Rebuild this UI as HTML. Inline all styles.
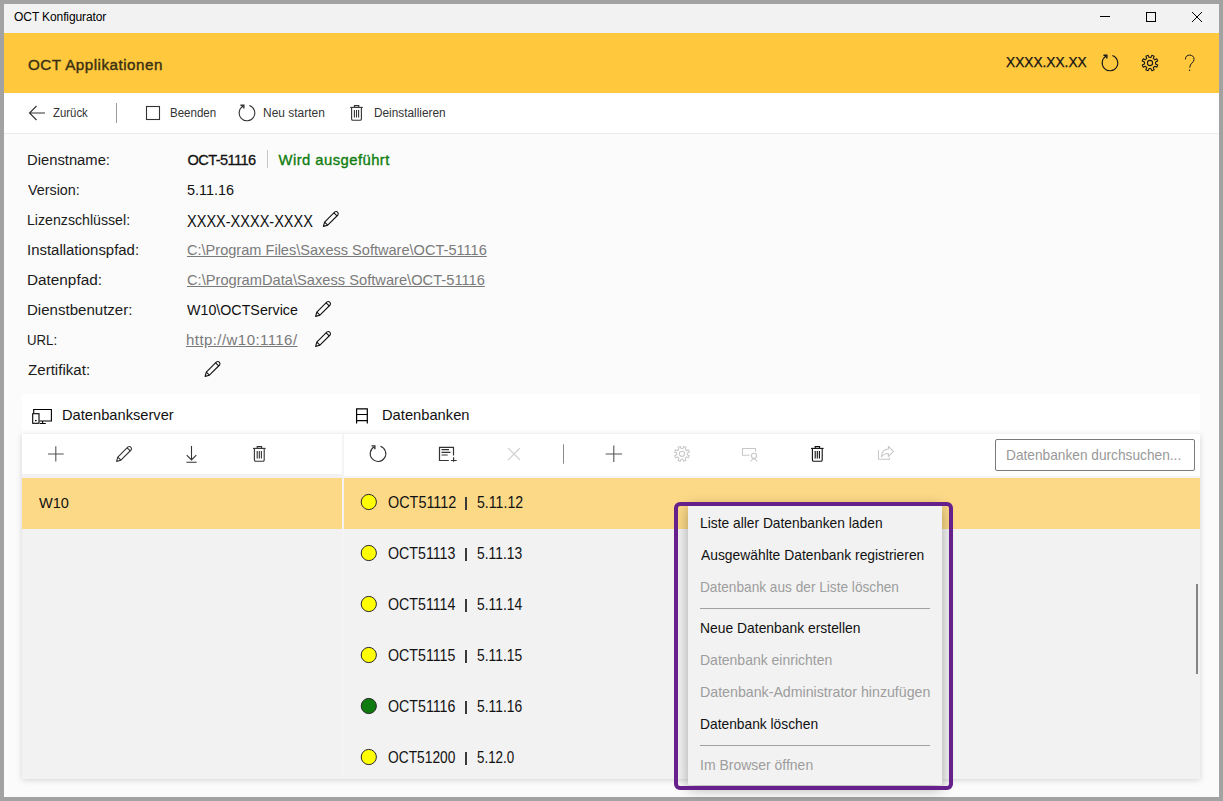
<!DOCTYPE html>
<html><head><meta charset="utf-8">
<style>
html,body{margin:0;padding:0;}
body{width:1223px;height:801px;position:relative;overflow:hidden;background:#a2a2a2;font-family:"Liberation Sans",sans-serif;color:#000;}
.t{position:absolute;white-space:nowrap;line-height:1;}
.b{position:absolute;}
svg{position:absolute;left:0;top:0;overflow:visible;}
</style></head>
<body>
<div class="b" style="left:4px;top:4px;width:1215px;height:793px;background:#fbfbfb;"></div>
<div class="b" style="left:4px;top:4px;width:1215px;height:29px;background:#f2f2f2;"></div>
<div class="t" style="left:14.10px;top:11.00px;font-size:12.0px;color:#000;letter-spacing:-0.109px;">OCT Konfigurator</div>
<div class="b" style="left:4px;top:32px;width:1215px;height:1px;background:#eef2f8;"></div>
<div class="b" style="left:4px;top:33px;width:1215px;height:60px;background:#ffc83d;"></div>
<div class="t" style="left:28.00px;top:57.01px;font-size:15.2px;color:#3a3012;letter-spacing:0.499px;-webkit-text-stroke:0.4px #3a3012;">OCT Applikationen</div>
<div class="t" style="left:1005.50px;top:55.01px;font-size:14.8px;color:#111;transform:scaleX(0.925);transform-origin:0 0;-webkit-text-stroke:0.25px #111;">XXXX.XX.XX</div>
<div class="b" style="left:4px;top:93px;width:1215px;height:40px;background:#fff;border-bottom:1px solid #ebebeb;"></div>
<div class="t" style="left:53.00px;top:107.01px;font-size:12.0px;color:#333;transform:scaleX(0.9476);transform-origin:0 0;">Zurück</div>
<div class="t" style="left:169.50px;top:107.01px;font-size:12.0px;color:#333;transform:scaleX(0.9605);transform-origin:0 0;">Beenden</div>
<div class="t" style="left:263.30px;top:107.01px;font-size:12.0px;color:#333;transform:scaleX(0.9958);transform-origin:0 0;">Neu starten</div>
<div class="t" style="left:373.50px;top:107.01px;font-size:12.0px;color:#333;transform:scaleX(0.9843);transform-origin:0 0;">Deinstallieren</div>
<div class="t" style="left:26.83px;top:152.01px;font-size:15.2px;color:#1a1a1a;transform:scaleX(0.9730);transform-origin:0 0;">Dienstname:</div>
<div class="t" style="left:27.80px;top:182.01px;font-size:15.2px;color:#1a1a1a;transform:scaleX(0.9430);transform-origin:0 0;">Version:</div>
<div class="t" style="left:26.87px;top:212.01px;font-size:15.2px;color:#1a1a1a;transform:scaleX(0.9320);transform-origin:0 0;">Lizenzschlüssel:</div>
<div class="t" style="left:26.82px;top:242.01px;font-size:15.2px;color:#1a1a1a;transform:scaleX(0.9833);transform-origin:0 0;">Installationspfad:</div>
<div class="t" style="left:26.79px;top:272.01px;font-size:15.2px;color:#1a1a1a;transform:scaleX(1.0085);transform-origin:0 0;">Datenpfad:</div>
<div class="t" style="left:26.81px;top:302.01px;font-size:15.2px;color:#1a1a1a;transform:scaleX(0.9909);transform-origin:0 0;">Dienstbenutzer:</div>
<div class="t" style="left:26.93px;top:332.01px;font-size:15.2px;color:#1a1a1a;transform:scaleX(0.8708);transform-origin:0 0;">URL:</div>
<div class="t" style="left:27.80px;top:362.01px;font-size:15.2px;color:#1a1a1a;transform:scaleX(0.9946);transform-origin:0 0;">Zertifikat:</div>
<div class="t" style="left:187.50px;top:153.01px;font-size:14.6px;color:#111;letter-spacing:-0.582px;-webkit-text-stroke:0.3px #111;">OCT-51116</div>
<div class="b" style="left:267px;top:150px;width:1px;height:18px;background:#c8c8c8;"></div>
<div class="t" style="left:278.50px;top:153.02px;font-size:14.8px;color:#0f7d0f;letter-spacing:0.455px;-webkit-text-stroke:0.35px #0f7d0f;">Wird ausgeführt</div>
<div class="t" style="left:187.20px;top:182.01px;font-size:15.2px;color:#111;transform:scaleX(0.9491);transform-origin:0 0;">5.11.16</div>
<div class="t" style="left:187.20px;top:214.01px;font-size:15.6px;color:#111;transform:scaleX(0.9315);transform-origin:0 0;">XXXX-XXXX-XXXX</div>
<div class="t" style="left:186.80px;top:242.01px;font-size:15.0px;color:#7a7a7a;text-decoration:underline;transform:scaleX(0.9709);transform-origin:0 0;">C:\Program Files\Saxess Software\OCT-51116</div>
<div class="t" style="left:186.80px;top:272.00px;font-size:15.0px;color:#7a7a7a;text-decoration:underline;transform:scaleX(0.9779);transform-origin:0 0;">C:\ProgramData\Saxess Software\OCT-51116</div>
<div class="t" style="left:187.00px;top:302.01px;font-size:15.2px;color:#111;transform:scaleX(0.9388);transform-origin:0 0;">W10\OCTService</div>
<div class="t" style="left:186.00px;top:332.01px;font-size:15.0px;color:#7a7a7a;letter-spacing:0.437px;text-decoration:underline;">http://w10:1116/</div>
<div class="b" style="left:22px;top:394px;width:1178px;height:40px;background:#fff;"></div>
<div class="t" style="left:62.21px;top:408.01px;font-size:14.8px;color:#111;transform:scaleX(0.9915);transform-origin:0 0;">Datenbankserver</div>
<div class="t" style="left:381.81px;top:408.01px;font-size:14.8px;color:#111;transform:scaleX(0.9942);transform-origin:0 0;">Datenbanken</div>
<div class="b" style="left:22px;top:434px;width:1178px;height:345px;background:#f2f2f2;box-shadow:0 1px 6px rgba(0,0,0,0.16);"></div>
<div class="b" style="left:22px;top:434px;width:320px;height:40px;background:#fff;"></div>
<div class="b" style="left:344px;top:434px;width:856px;height:42px;background:#fff;"></div>
<div class="b" style="left:344px;top:476px;width:856px;height:2px;background:#f3f4f7;"></div>
<div class="b" style="left:342px;top:434px;width:2px;height:345px;background:#f4f4f4;"></div>
<div class="b" style="left:995px;top:439px;width:198px;height:30px;border:1px solid #7a7a7a;border-radius:2px;background:#fff;"></div>
<div class="t" style="left:1005.75px;top:448.00px;font-size:14.4px;color:#999999;transform:scaleX(0.9521);transform-origin:0 0;">Datenbanken durchsuchen...</div>
<div class="b" style="left:22px;top:478px;width:320px;height:51px;background:#fcd987;"></div>
<div class="b" style="left:344px;top:478px;width:856px;height:51px;background:#fcd987;"></div>
<div class="t" style="left:39.30px;top:495.01px;font-size:15.2px;color:#111;transform:scaleX(0.9584);transform-origin:0 0;">W10</div>
<div class="t" style="left:387.60px;top:495.00px;font-size:15.8px;color:#111;transform:scaleX(0.9118);transform-origin:0 0;">OCT51112</div>
<div class="b" style="left:465.3px;top:496.60px;width:1.3px;height:13.8px;background:#3a3a3a;"></div>
<div class="t" style="left:476.90px;top:495.00px;font-size:15.8px;color:#111;transform:scaleX(0.8946);transform-origin:0 0;">5.11.12</div>
<div class="t" style="left:387.60px;top:546.00px;font-size:15.8px;color:#111;transform:scaleX(0.8996);transform-origin:0 0;">OCT51113</div>
<div class="b" style="left:465.3px;top:547.60px;width:1.3px;height:13.8px;background:#3a3a3a;"></div>
<div class="t" style="left:476.90px;top:546.00px;font-size:15.8px;color:#111;transform:scaleX(0.8773);transform-origin:0 0;">5.11.13</div>
<div class="t" style="left:387.60px;top:597.00px;font-size:15.8px;color:#111;transform:scaleX(0.8996);transform-origin:0 0;">OCT51114</div>
<div class="b" style="left:465.3px;top:598.60px;width:1.3px;height:13.8px;background:#3a3a3a;"></div>
<div class="t" style="left:476.90px;top:597.00px;font-size:15.8px;color:#111;transform:scaleX(0.8773);transform-origin:0 0;">5.11.14</div>
<div class="t" style="left:387.60px;top:648.00px;font-size:15.8px;color:#111;transform:scaleX(0.8996);transform-origin:0 0;">OCT51115</div>
<div class="b" style="left:465.3px;top:649.60px;width:1.3px;height:13.8px;background:#3a3a3a;"></div>
<div class="t" style="left:476.90px;top:648.00px;font-size:15.8px;color:#111;transform:scaleX(0.8773);transform-origin:0 0;">5.11.15</div>
<div class="t" style="left:387.60px;top:699.00px;font-size:15.8px;color:#111;transform:scaleX(0.8996);transform-origin:0 0;">OCT51116</div>
<div class="b" style="left:465.3px;top:700.60px;width:1.3px;height:13.8px;background:#3a3a3a;"></div>
<div class="t" style="left:476.90px;top:699.00px;font-size:15.8px;color:#111;transform:scaleX(0.8773);transform-origin:0 0;">5.11.16</div>
<div class="t" style="left:387.60px;top:750.00px;font-size:15.8px;color:#111;transform:scaleX(0.8724);transform-origin:0 0;">OCT51200</div>
<div class="b" style="left:465.3px;top:751.60px;width:1.3px;height:13.8px;background:#3a3a3a;"></div>
<div class="t" style="left:476.90px;top:750.00px;font-size:15.8px;color:#111;transform:scaleX(0.8474);transform-origin:0 0;">5.12.0</div>
<div class="b" style="left:1196px;top:584px;width:2px;height:90px;background:#858585;"></div>
<svg width="1223" height="801"><path d="M1100,16.5 H1110" stroke="#000" stroke-width="1"/><rect x="1146.5" y="12.5" width="9" height="9" fill="none" stroke="#000" stroke-width="1"/><path d="M1192,12 L1202,22 M1202,12 L1192,22" stroke="#000" stroke-width="1"/><path d="M1112.41,55.58 A7.8,7.8 0 1 1 1106.34,56.11" fill="none" stroke="#1a1a1a" stroke-width="1.1"/><path d="M1103.44,55.21 H1106.84 V58.51" fill="none" stroke="#1a1a1a" stroke-width="1.4000000000000001"/><path d="M1157.76,64.93 L1156.85,67.13 L1154.53,66.29 L1153.29,67.53 L1154.13,69.85 L1151.93,70.76 L1150.88,68.53 L1149.12,68.53 L1148.07,70.76 L1145.87,69.85 L1146.71,67.53 L1145.47,66.29 L1143.15,67.13 L1142.24,64.93 L1144.47,63.88 L1144.47,62.12 L1142.24,61.07 L1143.15,58.87 L1145.47,59.71 L1146.71,58.47 L1145.87,56.15 L1148.07,55.24 L1149.12,57.47 L1150.88,57.47 L1151.93,55.24 L1154.13,56.15 L1153.29,58.47 L1154.53,59.71 L1156.85,58.87 L1157.76,61.07 L1155.53,62.12 L1155.53,63.88Z" fill="none" stroke="#1a1a1a" stroke-width="1.1" stroke-linejoin="round"/><circle cx="1150" cy="63" r="2.6" fill="none" stroke="#1a1a1a" stroke-width="1.1"/><path d="M1185.4,59.4 C1185.4,56.3 1187.4,55.1 1189.7,55.1 C1192.1,55.1 1194.1,56.6 1194.1,59.3 C1194.1,62.6 1189.7,63.4 1189.7,67.6" fill="none" stroke="#1a1a1a" stroke-width="1"/><circle cx="1189.6" cy="70.3" r="0.7" fill="#1a1a1a"/><path d="M29.5,113 H45 M36.5,106 L29.5,113 L36.5,120" fill="none" stroke="#333" stroke-width="1.1"/><path d="M116.5,103 V123" stroke="#9a9a9a" stroke-width="1"/><rect x="146.5" y="106.5" width="13" height="13" fill="none" stroke="#333" stroke-width="1.1"/><path d="M249.41,105.58 A7.8,7.8 0 1 1 243.34,106.11" fill="none" stroke="#333" stroke-width="1.1"/><path d="M240.44,105.21 H243.84 V108.51" fill="none" stroke="#333" stroke-width="1.4000000000000001"/><g transform="translate(350.2,105)" fill="none" stroke="#333" stroke-width="1.1"><path d="M0,2.4 H12.6"/><path d="M4.2,2.4 V0.6 H8.6 V2.4"/><path d="M1.4,2.4 V14 Q1.4,15.3 2.8,15.3 H9.8 Q11.2,15.3 11.2,14 V2.4"/><path d="M4.2,5 V12.5 M6.3,5 V12.5 M8.4,5 V12.5"/></g><g transform="translate(322.8,211)" fill="none" stroke="#111" stroke-width="1.1" stroke-linejoin="round"><path d="M0.6,15.4 L1.8,11.1 L12,0.9 A2.25,2.25 0 0 1 15.1,4 L4.9,14.2 Z"/><path d="M1.8,11.1 L4.9,14.2 M11.1,1.8 L14.2,4.9"/></g><g transform="translate(315,301)" fill="none" stroke="#111" stroke-width="1.1" stroke-linejoin="round"><path d="M0.6,15.4 L1.8,11.1 L12,0.9 A2.25,2.25 0 0 1 15.1,4 L4.9,14.2 Z"/><path d="M1.8,11.1 L4.9,14.2 M11.1,1.8 L14.2,4.9"/></g><g transform="translate(315,331)" fill="none" stroke="#111" stroke-width="1.1" stroke-linejoin="round"><path d="M0.6,15.4 L1.8,11.1 L12,0.9 A2.25,2.25 0 0 1 15.1,4 L4.9,14.2 Z"/><path d="M1.8,11.1 L4.9,14.2 M11.1,1.8 L14.2,4.9"/></g><g transform="translate(204.5,361)" fill="none" stroke="#111" stroke-width="1.1" stroke-linejoin="round"><path d="M0.6,15.4 L1.8,11.1 L12,0.9 A2.25,2.25 0 0 1 15.1,4 L4.9,14.2 Z"/><path d="M1.8,11.1 L4.9,14.2 M11.1,1.8 L14.2,4.9"/></g><g fill="none" stroke="#000" stroke-width="1.1"><path d="M33.7,413 V409.5 H51.4 V421 H39.5"/><path d="M42.6,421 V423.3 M40,423.5 H45.8"/><rect x="32.7" y="413.7" width="6.3" height="9.6"/></g><rect x="35" y="420" width="1.6" height="1.2" fill="#000"/><g fill="none" stroke="#000" stroke-width="1.2"><path d="M356.6,423.6 V408.9 H367.3 V423.6"/><path d="M356.6,414.5 H367.3 M356.6,420.7 H367.3"/></g><path d="M48,454 H63.7 M55.8,446.2 V461.6" stroke="#555" stroke-width="1.1"/><g transform="translate(116,446)" fill="none" stroke="#333" stroke-width="1.1" stroke-linejoin="round"><path d="M0.6,15.4 L1.8,11.1 L12,0.9 A2.25,2.25 0 0 1 15.1,4 L4.9,14.2 Z"/><path d="M1.8,11.1 L4.9,14.2 M11.1,1.8 L14.2,4.9"/></g><path d="M191.5,446 V460 M186.7,455.2 L191.5,460 L196.3,455.2 M186.4,462.2 H196.7" fill="none" stroke="#333" stroke-width="1.1"/><g transform="translate(253,446)" fill="none" stroke="#333" stroke-width="1.1"><path d="M0,2.4 H12.6"/><path d="M4.2,2.4 V0.6 H8.6 V2.4"/><path d="M1.4,2.4 V14 Q1.4,15.3 2.8,15.3 H9.8 Q11.2,15.3 11.2,14 V2.4"/><path d="M4.2,5 V12.5 M6.3,5 V12.5 M8.4,5 V12.5"/></g><path d="M380.41,446.28 A7.8,7.8 0 1 1 374.34,446.81" fill="none" stroke="#333" stroke-width="1.1"/><path d="M371.44,445.91 H374.84 V449.21" fill="none" stroke="#333" stroke-width="1.4000000000000001"/><g fill="none" stroke="#333" stroke-width="1.2"><path d="M453.5,455.4 V447.3 H439.5 V460.5 H448.8"/><path d="M441.5,449.6 H449 M441.5,452.4 H450.5 M441.5,455 H447.7"/><path d="M450.9,460.5 H456.7 M453.6,457.2 V461.8"/></g><path d="M508,448 L520,460 M520,448 L508,460" stroke="#cfcfcf" stroke-width="1.1"/><path d="M563.5,444.3 V463.7" stroke="#8a8a8a" stroke-width="1"/><path d="M605.6,454 H622.1 M613.8,445.6 V462" stroke="#555" stroke-width="1.1"/><path d="M689.38,455.63 L688.51,457.72 L686.37,456.97 L685.17,458.17 L685.92,460.31 L683.83,461.18 L682.84,459.13 L681.16,459.13 L680.17,461.18 L678.08,460.31 L678.83,458.17 L677.63,456.97 L675.49,457.72 L674.62,455.63 L676.67,454.64 L676.67,452.96 L674.62,451.97 L675.49,449.88 L677.63,450.63 L678.83,449.43 L678.08,447.29 L680.17,446.42 L681.16,448.47 L682.84,448.47 L683.83,446.42 L685.92,447.29 L685.17,449.43 L686.37,450.63 L688.51,449.88 L689.38,451.97 L687.33,452.96 L687.33,454.64Z" fill="none" stroke="#c8c8c8" stroke-width="1.1" stroke-linejoin="round"/><circle cx="682" cy="453.8" r="2.6" fill="none" stroke="#c8c8c8" stroke-width="1.1"/><g fill="none" stroke="#c8c8c8" stroke-width="1.1"><path d="M755.5,451.5 V448.5 H742.5 V455.3 H749.6"/><circle cx="754" cy="455.8" r="2.6"/><path d="M750.4,461.5 Q754,456.6 757.4,461.5"/></g><g transform="translate(811,446)" fill="none" stroke="#111" stroke-width="1.1"><path d="M0,2.4 H12.6"/><path d="M4.2,2.4 V0.6 H8.6 V2.4"/><path d="M1.4,2.4 V14 Q1.4,15.3 2.8,15.3 H9.8 Q11.2,15.3 11.2,14 V2.4"/><path d="M4.2,5 V12.5 M6.3,5 V12.5 M8.4,5 V12.5"/></g><g fill="none" stroke="#c8c8c8" stroke-width="1.1" stroke-linejoin="round"><path d="M878.5,450 V459.3 H889.5 V457.4"/><path d="M881.4,456.8 Q882,449 888.4,449 V446.4 L893.4,451.4 L888.4,456.4 V453.5 Q883.5,453.5 881.4,456.8 Z"/></g><circle cx="368.8" cy="502" r="7.6" fill="#ffff00" stroke="#2a2a2a" stroke-width="1"/><circle cx="368.8" cy="553" r="7.6" fill="#ffff00" stroke="#2a2a2a" stroke-width="1"/><circle cx="368.8" cy="604" r="7.6" fill="#ffff00" stroke="#2a2a2a" stroke-width="1"/><circle cx="368.8" cy="655" r="7.6" fill="#ffff00" stroke="#2a2a2a" stroke-width="1"/><circle cx="368.8" cy="706" r="7.6" fill="#0f7b0f" stroke="#2a2a2a" stroke-width="1"/><circle cx="368.8" cy="757" r="7.6" fill="#ffff00" stroke="#2a2a2a" stroke-width="1"/></svg>
<div class="b" style="left:688px;top:503px;width:254px;height:282px;background:#f2f2f2;border-radius:2px;box-shadow:0 4px 14px rgba(0,0,0,0.32);"></div>
<div class="t" style="left:699.55px;top:516.02px;font-size:14.6px;color:#111;transform:scaleX(0.9454);transform-origin:0 0;">Liste aller Datenbanken laden</div>
<div class="t" style="left:700.50px;top:548.02px;font-size:14.6px;color:#111;transform:scaleX(0.9492);transform-origin:0 0;">Ausgewählte Datenbank registrieren</div>
<div class="t" style="left:699.56px;top:580.02px;font-size:14.6px;color:#9d9d9d;transform:scaleX(0.9360);transform-origin:0 0;">Datenbank aus der Liste löschen</div>
<div class="t" style="left:699.55px;top:621.02px;font-size:14.6px;color:#111;transform:scaleX(0.9509);transform-origin:0 0;">Neue Datenbank erstellen</div>
<div class="t" style="left:699.54px;top:653.02px;font-size:14.6px;color:#9d9d9d;transform:scaleX(0.9590);transform-origin:0 0;">Datenbank einrichten</div>
<div class="t" style="left:699.53px;top:685.02px;font-size:14.6px;color:#9d9d9d;transform:scaleX(0.9726);transform-origin:0 0;">Datenbank-Administrator hinzufügen</div>
<div class="t" style="left:699.56px;top:717.02px;font-size:14.6px;color:#111;transform:scaleX(0.9449);transform-origin:0 0;">Datenbank löschen</div>
<div class="t" style="left:699.54px;top:758.02px;font-size:14.6px;color:#9d9d9d;transform:scaleX(0.9578);transform-origin:0 0;">Im Browser öffnen</div>
<div class="b" style="left:700px;top:608px;width:230px;height:1px;background:#a0a0a0;"></div>
<div class="b" style="left:700px;top:745px;width:230px;height:1px;background:#a0a0a0;"></div>
<div class="b" style="left:674px;top:502px;width:271px;height:280px;border:4px solid #65208c;border-radius:6px;"></div>
</body></html>
